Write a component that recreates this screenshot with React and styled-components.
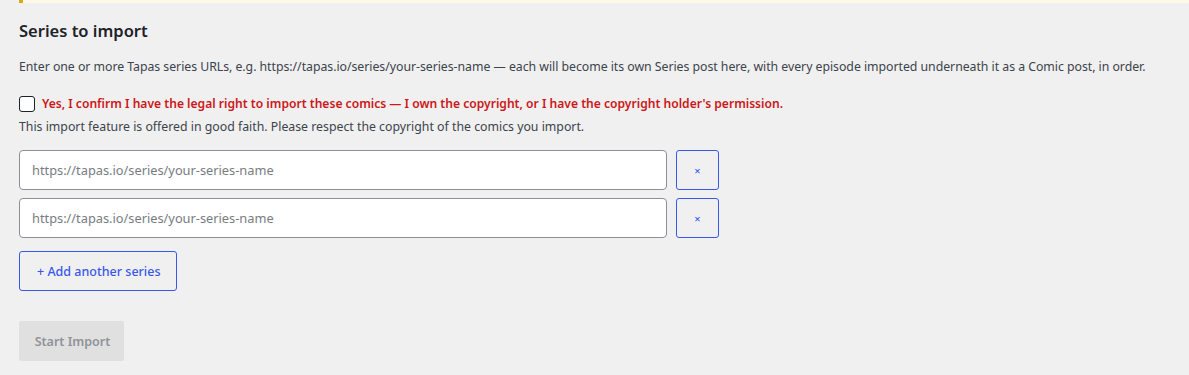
import React, { useState } from "react";
import styled, { createGlobalStyle } from "styled-components";

const GlobalStyle = createGlobalStyle`
  body {
    margin: 0;
    background: #f0f0f1;
    font-family: "Noto Sans", "Open Sans", sans-serif;
    font-size: 13px;
    color: #3c434a;
  }
`;

const Wrap = styled.div`
  padding: 0 0 0 19px;
`;

const NoticeEdge = styled.div`
  height: 3px;
  background: #fcf9e8;
  border-left: 4px solid #dba617;
`;

const Title = styled.h2`
  margin: 16px 0 0;
  font-size: 16.5px;
  font-weight: 600;
  color: #1d2327;
  line-height: 24px;
`;

const Lead = styled.p`
  margin: 15px 0 0;
  font-size: 12.3px;
  line-height: 18px;
  letter-spacing: -0.035px;
`;

const ConfirmRow = styled.label`
  display: flex;
  align-items: center;
  gap: 7px;
  margin-top: 19px;
  color: #cc1818;
  font-weight: 600;
  font-size: 12.1px;
`;

const Box = styled.span`
  width: 14px;
  height: 14px;
  border: 1px solid #1d2327;
  border-radius: 3px;
  background: #fff;
  flex: none;
`;

const Note = styled.p`
  margin: 6px 0 0;
  font-size: 12.3px;
  line-height: 18px;
`;

const List = styled.div`
  display: flex;
  flex-direction: column;
  gap: 8px;
  margin-top: 14px;
`;

const Row = styled.div`
  display: flex;
  gap: 9px;
`;

const UrlInput = styled.input`
  box-sizing: border-box;
  width: 648px;
  height: 40px;
  padding: 0 12px;
  border: 1px solid #8c8f94;
  border-radius: 4px;
  background: #fff;
  font-family: inherit;
  font-size: 12.8px;
  color: #2c3338;
  &::placeholder { color: #787c82; }
`;

const OutlineButton = styled.button`
  box-sizing: border-box;
  height: 40px;
  padding: ${(p) => (p.$square ? "0" : "0 16px 0 17px")};
  width: ${(p) => (p.$square ? "43px" : "auto")};
  border: 1px solid #3858e9;
  border-radius: 3px;
  background: transparent;
  color: #3858e9;
  font-family: inherit;
  font-size: ${(p) => (p.$square ? "11px" : "12.5px")};
  font-weight: 500;
`;

const AddRow = styled.div`
  margin-top: 13px;
`;

const StartButton = styled.button`
  box-sizing: border-box;
  margin-top: 30px;
  height: 40px;
  width: 105px;
  padding: 0 0 0 2px;
  border: none;
  border-radius: 2px;
  background: #e0e0e0;
  color: #8f9398;
  font-family: inherit;
  font-size: 12.5px;
  font-weight: 600;
`;

export default function App() {
  const [rows, setRows] = useState([0, 1]);
  return (
    <>
      <GlobalStyle />
      <Wrap>
        <NoticeEdge />
        <Title>Series to import</Title>
        <Lead>
          Enter one or more Tapas series URLs, e.g. https://tapas.io/series/your-series-name — each will become its own Series post here, with every episode imported underneath it as a Comic post, in order.
        </Lead>
        <ConfirmRow>
          <Box />
          Yes, I confirm I have the legal right to import these comics — I own the copyright, or I have the copyright holder's permission.
        </ConfirmRow>
        <Note>This import feature is offered in good faith. Please respect the copyright of the comics you import.</Note>
        <List>
          {rows.map((r) => (
            <Row key={r}>
              <UrlInput placeholder="https://tapas.io/series/your-series-name" />
              <OutlineButton $square onClick={() => setRows(rows.filter((x) => x !== r))}>×</OutlineButton>
            </Row>
          ))}
        </List>
        <AddRow>
          <OutlineButton onClick={() => setRows([...rows, Date.now()])}>+ Add another series</OutlineButton>
        </AddRow>
        <div>
          <StartButton disabled>Start Import</StartButton>
        </div>
      </Wrap>
    </>
  );
}
